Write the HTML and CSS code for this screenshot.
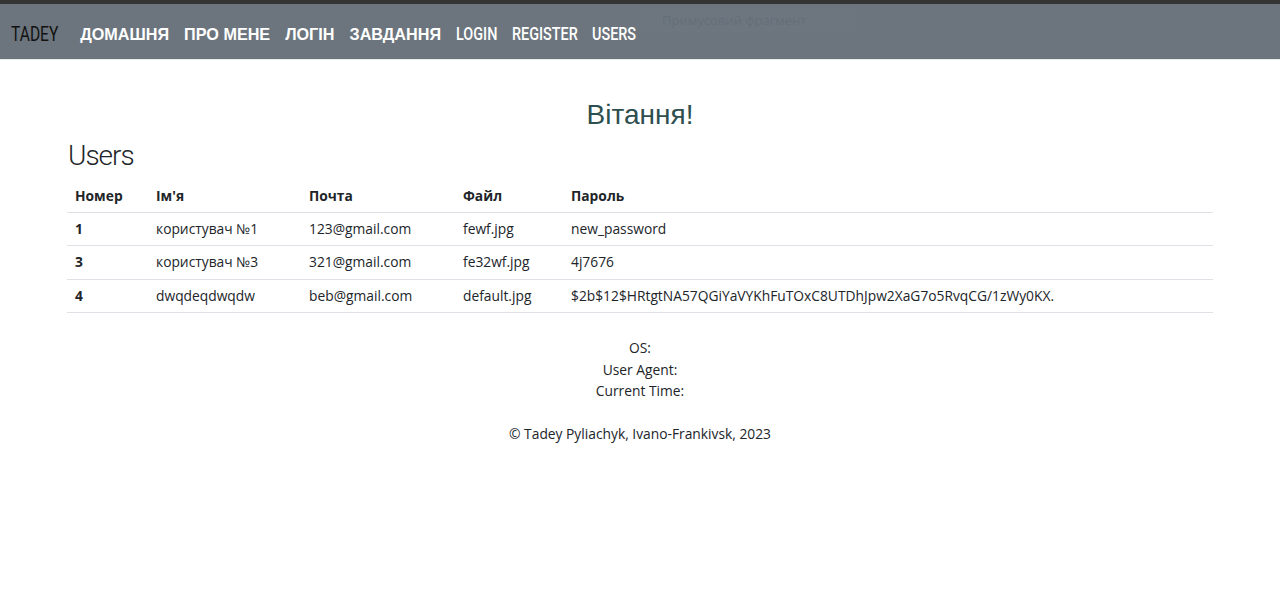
FILE: index.html
```html
<!DOCTYPE html>
<html lang="uk">
<head>
<meta charset="utf-8">
<title>Users</title>
<link rel="stylesheet" href="styles.css">
</head>
<body>
<header class="topbar">
  <nav class="navbar">
    <a class="brand cond" href="#">TADEY</a>
    <ul class="nav-links">
      <li><a class="nav-cyr" href="#">ДОМАШНЯ</a></li>
      <li><a class="nav-cyr" href="#">ПРО МЕНЕ</a></li>
      <li><a class="nav-cyr" href="#">ЛОГІН</a></li>
      <li><a class="nav-cyr" href="#">ЗАВДАННЯ</a></li>
      <li><a class="nav-lat cond w-login" href="#">LOGIN</a></li>
      <li><a class="nav-lat cond w-register" href="#">REGISTER</a></li>
      <li><a class="nav-lat cond w-users" href="#">USERS</a></li>
    </ul>
    <div class="ghost">Примусовий фрагмент</div>
  </nav>
</header>

<main class="container">
  <h1 class="greeting">Вітання!</h1>
  <h2 class="section-title">Users</h2>
  <table class="users-table">
    <thead>
      <tr><th class="c-num">Номер</th><th class="c-name">Ім'я</th><th class="c-mail">Почта</th><th class="c-file">Файл</th><th>Пароль</th></tr>
    </thead>
    <tbody>
      <tr><th>1</th><td>користувач №1</td><td>123@gmail.com</td><td>fewf.jpg</td><td>new_password</td></tr>
      <tr><th>3</th><td>користувач №3</td><td>321@gmail.com</td><td>fe32wf.jpg</td><td>4j7676</td></tr>
      <tr><th>4</th><td>dwqdeqdwqdw</td><td>beb@gmail.com</td><td>default.jpg</td><td>$2b$12$HRtgtNA57QGiYaVYKhFuTOxC8UTDhJpw2XaG7o5RvqCG/1zWy0KX.</td></tr>
    </tbody>
  </table>
</main>

<footer class="footer">
  <div class="sysinfo">
    <div>OS:</div>
    <div>User Agent:</div>
    <div>Current Time:</div>
  </div>
  <p class="copy">© Tadey Pyliachyk, Ivano-Frankivsk, 2023</p>
</footer>
</body>
</html>
```

FILE: styles.css
```css
* { box-sizing: border-box; }
html, body { margin: 0; padding: 0; background: #fff; }
body {
  font-family: "Open Sans", "Noto Sans", sans-serif;
  color: #212529;
}

.topbar {
  border-top: 4px solid #343434;
  background: #6c757d;
  border-bottom: 1px solid #e9ecef;
}
.navbar {
  position: relative;
  height: 55px;
  display: flex;
  align-items: center;
  padding: 5px 0 0 11px;
}
.navbar a { text-decoration: none; }
.cond {
  display: inline-block;
  font-family: Roboto, sans-serif;
  transform: scaleX(0.8);
  transform-origin: left center;
}
.brand {
  color: #111;
  font-size: 19.5px;
  font-weight: 400;
  margin-right: -11px;
}
.nav-links {
  list-style: none;
  margin: 0 0 0 21px;
  padding: 0;
  display: flex;
  gap: 15px;
  align-items: center;
}
.nav-cyr {
  font-family: "Liberation Sans", Arial, sans-serif;
  font-weight: 700;
  font-size: 16.2px;
  color: #fff;
}
.nav-lat {
  color: #fff;
  font-size: 18px;
  font-weight: 500;
}
.w-login { margin-right: -11px; }
.w-register { margin-right: -17px; }
.w-users { margin-right: -11px; }
.ghost {
  position: absolute;
  left: 640px;
  top: 3px;
  width: 215px;
  height: 26px;
  padding-left: 22px;
  font-family: "Open Sans", sans-serif;
  font-size: 13px;
  line-height: 26px;
  color: #646e78;
  background: rgba(120, 130, 140, 0.15);
}

.container {
  width: 1146px;
  margin: 0 auto;
}
.greeting {
  margin: 37px 0 0;
  text-align: center;
  font-family: "Liberation Sans", Arial, sans-serif;
  font-weight: 400;
  font-size: 28px;
  line-height: 35px;
  color: #2f4f4f;
}
.section-title {
  margin: 7px 0 8px 1px;
  font-family: Roboto, sans-serif;
  font-weight: 300;
  font-size: 28px;
  line-height: 34px;
  letter-spacing: -1px;
  color: #212529;
}
.users-table {
  width: 100%;
  border-collapse: collapse;
  font-size: 13.8px;
}
.users-table th,
.users-table td {
  text-align: left;
  padding: 8px 8px;
  line-height: 16.5px;
  border-bottom: 1px solid #dee2e6;
}
.users-table th { font-weight: 700; }
.users-table thead th { padding-top: 7px; padding-bottom: 7px; }
.c-num { width: 81px; }
.c-name { width: 153px; }
.c-mail { width: 154px; }
.c-file { width: 108px; }

.footer {
  text-align: center;
  font-size: 13.8px;
  margin-top: 24px;
}
.sysinfo div { line-height: 21.5px; }
.copy { margin: 21px 0 0; line-height: 21.5px; }
```
